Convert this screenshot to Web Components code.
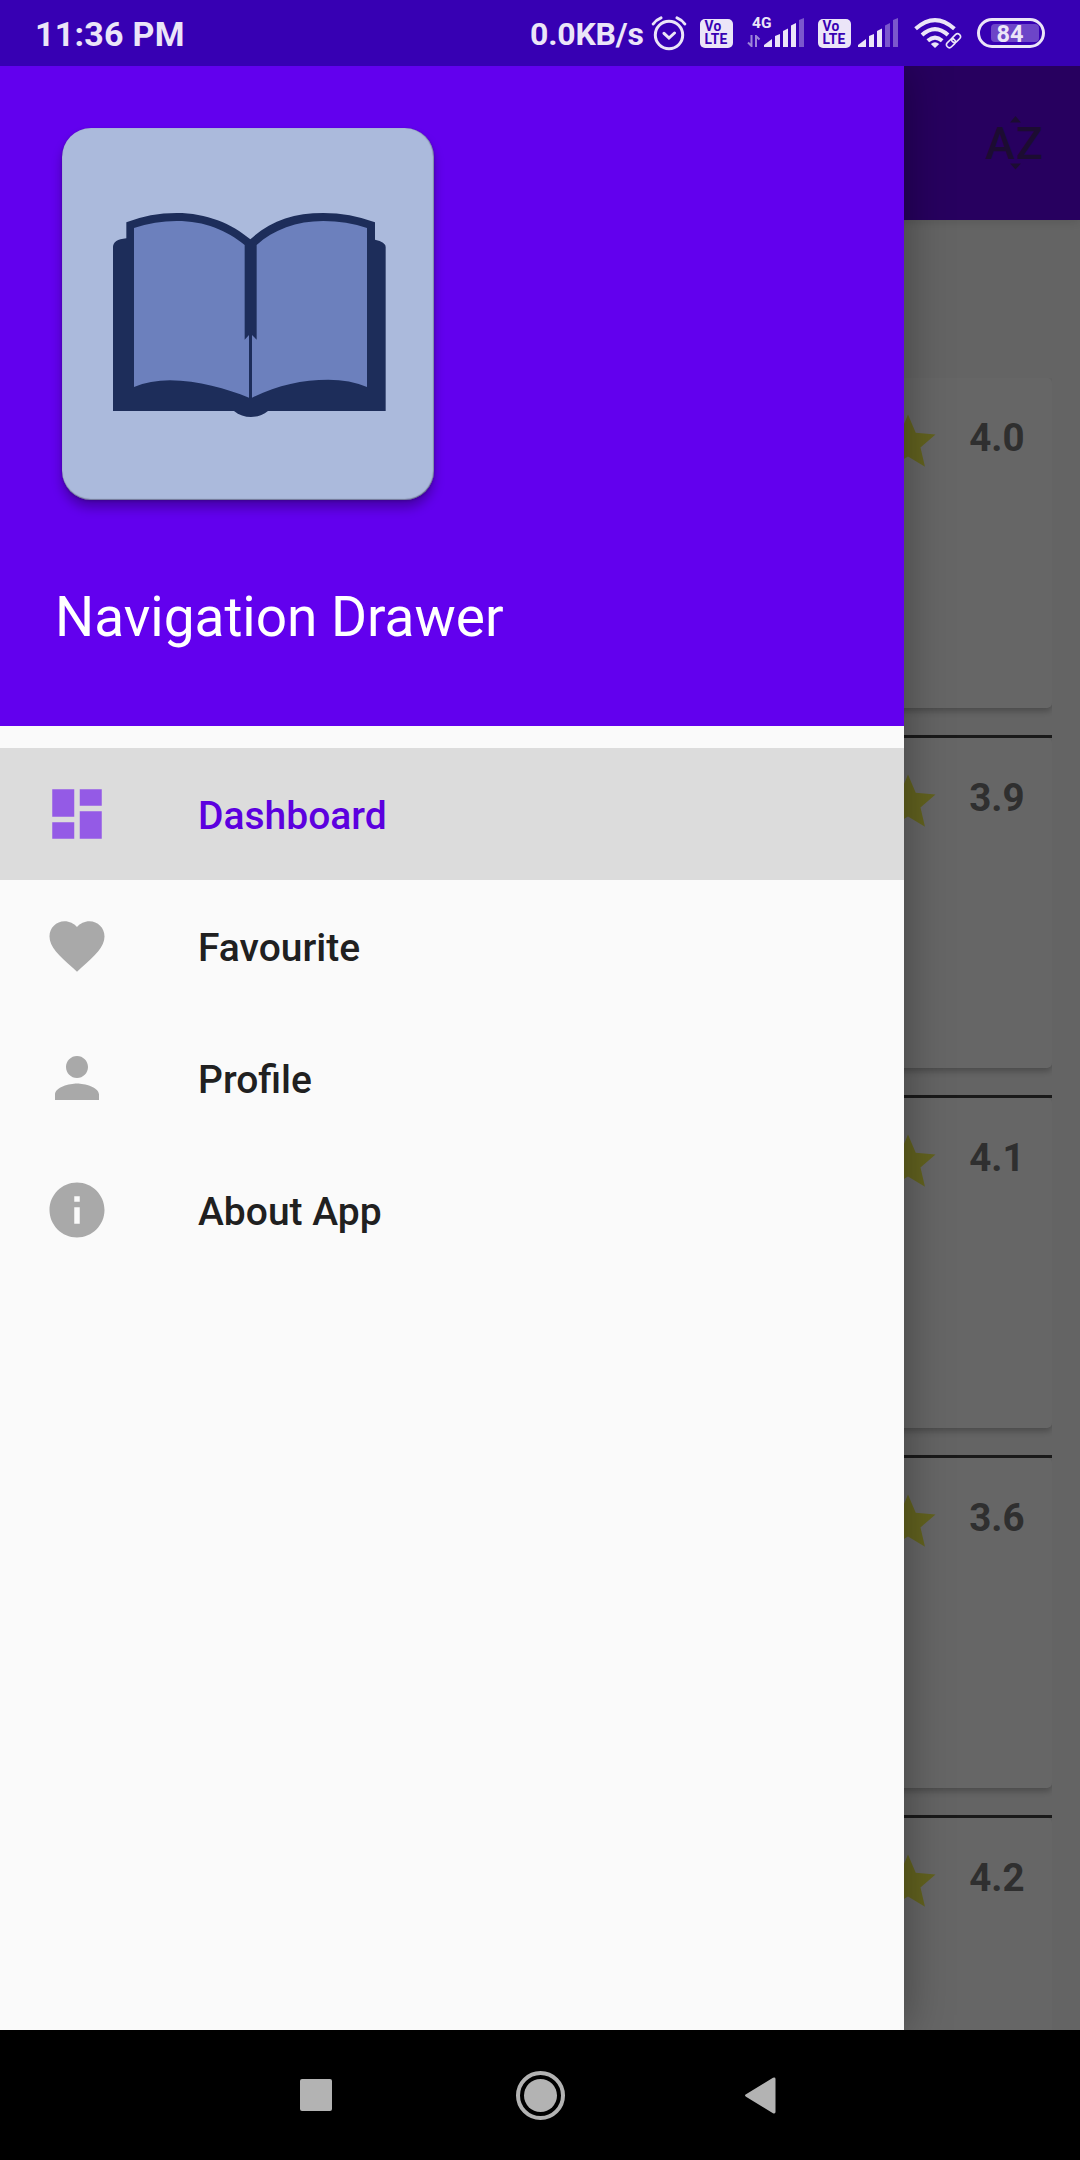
<!DOCTYPE html>
<html lang="en">
<head>
<meta charset="utf-8">
<title>Book Hub</title>
<style>
html,body{margin:0;padding:0}
body{width:1080px;height:2160px;overflow:hidden;font-family:Roboto,"Liberation Sans",sans-serif;background:#000}
</style>
</head>
<body>
<phone-screen>
  <status-bar slot="status"></status-bar>
  <library-page slot="page">
    <book-card rating="4.0" first></book-card>
    <book-card rating="3.9"></book-card>
    <book-card rating="4.1"></book-card>
    <book-card rating="3.6"></book-card>
    <book-card rating="4.2"></book-card>
  </library-page>
  <nav-drawer slot="drawer">
    <drawer-header slot="header">Navigation Drawer</drawer-header>
    <menu-item icon="dashboard" selected>Dashboard</menu-item>
    <menu-item icon="heart">Favourite</menu-item>
    <menu-item icon="person">Profile</menu-item>
    <menu-item icon="info">About App</menu-item>
  </nav-drawer>
  <system-nav slot="nav"></system-nav>
</phone-screen>
<script>
const define = (name, render) => customElements.define(name, class extends HTMLElement {
  constructor() { super(); this.attachShadow({ mode: 'open' }); }
  connectedCallback() { this.shadowRoot.innerHTML = render(this); }
});

define('phone-screen', () => `
<style>
:host{display:grid;grid-template-rows:66px 1964px 130px;width:1080px;height:2160px;overflow:hidden}
main{display:grid;grid-template:1964px / 1080px;overflow:hidden}
main ::slotted(*),.scrim{grid-area:1/1}
.scrim{background:rgba(0,0,0,.6)}
</style>
<slot name="status"></slot>
<main><slot name="page"></slot><div class="scrim"></div><slot name="drawer"></slot></main>
<slot name="nav"></slot>`);

define('volte-badge', () => `
<style>
:host{display:flex;flex-direction:column;box-sizing:border-box;width:33px;height:29px;border-radius:5px;background:#ebe5f8;color:#3700b3;font-weight:700;padding:1px 0 0 4.5px}
span{display:block;font-size:13.8px;line-height:13.4px;height:13.4px;white-space:nowrap;letter-spacing:.3px}
</style><span>Vo</span><span>LTE</span>`);

define('signal-bars', el => {
  const on = +el.getAttribute('level');
  const bars = [[11,18,16],[19,13,10.5],[27,7.5,5],[35,2,0]];
  return `<style>:host{display:block;width:40px;height:29px}svg{display:block}</style>
<svg width="40" height="29" fill="#ebe5f8"><path d="M0 29V27L8 21V29Z"/>${bars.map(([x,a,b],i)=>
  `<path d="M${x} 29V${a}L${x+5} ${b}V29Z" opacity="${i+1<on?1:.38}"/>`).join('')}</svg>`;
});

define('status-bar', () => `
<style>
:host{display:flex;align-items:center;box-sizing:border-box;height:66px;padding:1px 35px 0 35px;background:#3700b3;color:#ebe5f8;font-weight:700;white-space:nowrap}
.time{font-size:34px;flex:1;line-height:40px;letter-spacing:.25px}
.speed{font-size:32px;line-height:40px;width:114px;margin-right:7px;letter-spacing:-.2px}
.row{display:flex;align-items:flex-start;height:31px;margin-top:0}
svg{display:block;flex:none}
.net{display:flex;flex-direction:column;width:17px;height:31px}
.net span{font-size:15.5px;line-height:13px;margin-left:5px;margin-top:-1px}
.net svg{margin-top:5px}
volte-badge,signal-bars{flex:none}
</style>
<span class="time">11:36 PM</span>
<span class="speed">0.0KB/s</span>
<div class="row">
<svg width="36" height="36" viewBox="0 0 36 36" fill="none" stroke="#ebe5f8" stroke-width="3" stroke-linecap="round" style="margin-top:-2px"><circle cx="18" cy="19" r="13.7"/><path d="M2.2 8Q5 3.8 10 1.8M33.8 8Q31 3.8 26 1.8M13 17.3l5 4.7 5.5-5"/></svg>
<volte-badge style="margin:1px 0 0 13px"></volte-badge>
<div class="net" style="margin-left:14px"><span>4G</span><svg width="14" height="12" viewBox="0 0 14 12" fill="none" stroke="#9d86d9" stroke-width="2"><path d="M4.5 0V11L1 7.5M9 12V1l3.5 3.5"/></svg></div>
<signal-bars level="4"></signal-bars>
<volte-badge style="margin:1px 0 0 14px"></volte-badge>
<signal-bars level="3" style="margin:0 0 0 7px"></signal-bars>
<svg width="48" height="31" viewBox="0 0 48 31" fill="none" stroke="#ebe5f8" stroke-width="4" style="margin:0 0 0 16px"><path d="M1.6 10.8Q21 -6.6 40.4 10.8M8 17Q21 5.2 34 17M13.8 22.8Q21 16.6 28.2 22.8"/><path d="M21 30L16.8 26Q21 22.5 25.2 26Z" fill="#ebe5f8" stroke="none"/><g transform="translate(39.5 22.7) rotate(-45)" stroke="#3700b3" stroke-width="5"><rect x="-8" y="-2.6" width="9" height="5.2" rx="2.6"/><rect x="-1" y="-2.6" width="9" height="5.2" rx="2.6"/></g><g transform="translate(39.5 22.7) rotate(-45)" stroke-width="1.6"><rect x="-8.6" y="-2.9" width="10" height="5.8" rx="2.9"/><rect x="-1.4" y="-2.9" width="10" height="5.8" rx="2.9"/></g></svg>
<svg width="68" height="30" viewBox="0 0 68 30" style="margin:0 0 0 15px"><rect x="1.5" y="1.5" width="65" height="27" rx="13.5" fill="none" stroke="#ebe5f8" stroke-width="3"/><rect x="14" y="6" width="48" height="18" rx="4" fill="#ebe5f8" opacity=".3"/><text x="19.6" y="23.6" font-size="23.5" font-weight="700" fill="#ebe5f8">84</text></svg>
</div>`);

define('library-page', () => `
<style>
:host{display:flex;flex-direction:column;height:1964px;background:#fafafa;overflow:hidden}
header{flex:none;display:flex;justify-content:flex-end;align-items:center;box-sizing:border-box;height:154px;padding-right:34px;background:#6200ee;box-shadow:0 2px 10px rgba(0,0,0,.12)}
.list{flex:none;display:flex;flex-direction:column;margin:158px 28px 0 28px;height:1652px;overflow:hidden}
svg{display:block}
</style>
<header><svg width="66" height="66" viewBox="0 0 66 66" fill="#461e7d"><path d="M30 12.5L35.5 6L41 12.5ZM30 53.5H41L35.5 59.5Z"/><text y="49" x="5.3 36" font-size="44.5" font-weight="500">AZ</text></svg></header>
<div class="list"><slot></slot></div>`);

define('book-card', el => `
<style>
:host{display:block;flex:none}
hr{border:0;margin:0;height:3px;background:#424242}
:host([first]) hr{display:none}
article{display:flex;justify-content:flex-end;align-items:flex-start;box-sizing:border-box;height:330px;margin-bottom:27px;padding:31px 27.5px 0 0;background:#fff;border-radius:5px;box-shadow:0 3px 7px rgba(0,0,0,.28)}
svg{display:block;margin-right:28.5px}
span{font-size:38.5px;line-height:45px;font-weight:700;color:#757575;margin-top:5.5px}
</style>
<hr>
<article><svg width="66" height="66" viewBox="0 0 24 24" fill="#f6f64e"><path d="M12 17.27L18.18 21l-1.64-7.03L22 9.24l-7.19-.61L12 2 9.19 8.63 2 9.24l5.46 4.73L5.82 21z"/></svg><span>${el.getAttribute('rating')}</span></article>`);

define('nav-drawer', () => `
<style>
:host{display:flex;flex-direction:column;width:904px;height:1964px;background:#fafafa;box-shadow:0 0 44px rgba(0,0,0,.36);z-index:1}
nav{display:flex;flex-direction:column;padding-top:22px}
</style>
<slot name="header"></slot><nav><slot></slot></nav>`);

define('drawer-header', () => `
<style>
:host{display:flex;flex-direction:column;align-items:flex-start;box-sizing:border-box;height:660px;padding:62px 0 0 55px;background:#6200ee;color:#fff}
.logo{display:block;margin-left:7.4px;width:372px;height:372px;border-radius:29px;background:#abbadc;box-shadow:0 8px 11px rgba(0,0,0,.28),0 1px 3px rgba(0,0,0,.2),inset 0 -1px 1px rgba(60,60,90,.5),inset -1px 0 1px rgba(60,60,90,.35)}
.name{font-size:55px;line-height:64px;margin-top:85px;white-space:nowrap;letter-spacing:-.03px}
</style>
<svg class="logo" viewBox="66 83 1116 1116">
<path fill="#1d2d5a" d="M219 932V440Q219 418 259 414V366Q330 338 410 338C500 338 575 370 631 417C690 362 760 338 850 338Q930 338 1005 366V418Q1037 425 1037 440V932H684C655 956 611 956 582 932Z"/>
<path fill="#6c80bd" d="M282 383Q345 362 410 362C495 362 560 390 614 434V718L627 704V892C560 866 475 840 390 840Q330 840 282 860ZM981 383Q920 362 850 362C770 362 700 388 650 434V718L636 704V892C710 855 785 838 865 838Q930 838 981 860Z"/>
</svg>
<span class="name"><slot></slot></span>`);

const icons = {
  dashboard: 'M3 13h8V3H3v10zm0 8h8v-6H3v6zm10 0h8V11h-8v10zm0-18v6h8V3h-8z',
  heart: 'M12 21.35l-1.45-1.32C5.4 15.36 2 12.28 2 8.5 2 5.42 4.42 3 7.5 3c1.74 0 3.41.81 4.5 2.09C13.09 3.81 14.76 3 16.5 3 19.58 3 22 5.42 22 8.5c0 3.78-3.4 6.86-8.55 11.54L12 21.35z',
  person: 'M12 12c2.21 0 4-1.79 4-4s-1.79-4-4-4-4 1.79-4 4 1.79 4 4 4zm0 2c-2.67 0-8 1.34-8 4v2h16v-2c0-2.66-5.33-4-8-4z',
  info: 'M12 2C6.48 2 2 6.48 2 12s4.48 10 10 10 10-4.48 10-10S17.52 2 12 2zm1 15h-2v-6h2v6zm0-8h-2V7h2v2z'
};
define('menu-item', el => `
<style>
:host{display:flex;align-items:center;box-sizing:border-box;height:132px;padding-left:44px;gap:88px;color:#202020;font-size:39px;font-weight:500;line-height:45px}
:host([selected]){background:#dcdcdc;color:#5c00df}
svg{display:block;fill:#a9a9a9}
:host([selected]) svg{fill:#945ae6}
span{margin-top:5px}
</style>
<svg width="66" height="66" viewBox="0 0 24 24"><path d="${icons[el.getAttribute('icon')]}"/></svg><span><slot></slot></span>`);

define('system-nav', () => `
<style>
:host{display:flex;align-items:center;justify-content:space-between;box-sizing:border-box;height:130px;padding:0 304px 0 300px;background:#000}
svg{display:block;fill:#b3b3b3}
svg:nth-of-type(2){margin:1px 0 0 4px}
</style>
<svg width="32" height="32"><rect width="32" height="32" rx="2"/></svg>
<svg width="49" height="49" viewBox="0 0 49 49"><circle cx="24.5" cy="24.5" r="22.5" fill="none" stroke="#b3b3b3" stroke-width="4"/><circle cx="24.5" cy="24.5" r="16.5"/></svg>
<svg width="32" height="37" viewBox="0 0 32 37"><path d="M2 17.3L29 .8Q31.5 0 31.5 2V35Q31.5 37 29 36.2L2 19.7Q0 18.5 2 17.3Z"/></svg>`);
</script>
</body>
</html>
